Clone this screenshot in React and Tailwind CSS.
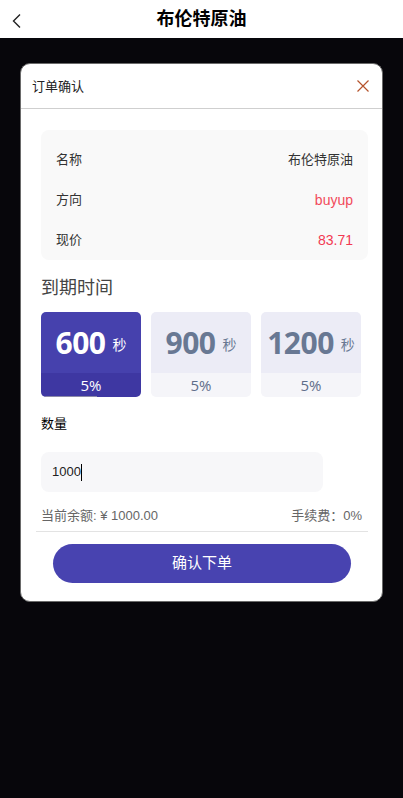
import React from "react";

const cjk = { fontFamily: '"Liberation Sans", "Noto Sans CJK SC", sans-serif' };
const num = { fontFamily: '"Open Sans", "Noto Sans CJK SC", sans-serif' };

function Card({ value, active }) {
  return (
    <div className="relative w-[100px] h-[85px] rounded-[5px] overflow-hidden flex flex-col">
      <div
        className={`h-[61px] flex items-center justify-center gap-[7px] ${
          active ? "bg-[#4641ad] text-white" : "bg-[#ececf6] text-[#687893]"
        }`}
      >
        <span className="text-[30px] font-bold leading-none tracking-[-0.5px]" style={num}>
          {value}
        </span>
        <span className="text-[14px] mt-[6px]" style={cjk}>秒</span>
      </div>
      <div
        className={`h-[24px] flex items-center justify-center text-[15px] ${
          active ? "bg-[#3e37a2] text-white" : "bg-[#f5f5f9] text-[#5f6d8a]"
        }`}
        style={num}
      >
        5%
      </div>
      {active && <div className="absolute left-[4px] bottom-0 w-[52px] h-[1px] bg-[#8c8aa8]" />}
    </div>
  );
}

export default function App() {
  return (
    <div className="min-h-[798px] bg-[#07060b]" style={cjk}>
      <div className="h-[38px] bg-white relative flex items-center justify-center">
        <svg className="absolute left-[11px] top-[13px]" width="11" height="16" viewBox="0 0 11 16">
          <path d="M9 1.5 L2.5 8 L9 14.5" fill="none" stroke="#222" strokeWidth="1.4" />
        </svg>
        <span className="text-[18px] font-bold text-black">布伦特原油</span>
      </div>

      <div className="mx-[20px] mt-[25px] bg-white rounded-[10px] border border-[#6a6a6a] pb-[18px]">
        <div className="h-[45px] flex items-center justify-between pl-[11px] pr-[13px] border-b border-[#cfcfcf]">
          <span className="text-[13px] text-[#222] mt-[1px]">订单确认</span>
          <svg width="12" height="12" viewBox="0 0 12 12">
            <path d="M0.5 0.5 L11.5 11.5 M11.5 0.5 L0.5 11.5" stroke="#b5532c" strokeWidth="1.2" />
          </svg>
        </div>

        <div className="pl-[20px]">
          <div className="mt-[21px] w-[327px] bg-[#f9f9f9] rounded-[8px] pt-[10px] text-[13px]">
            <div className="h-[40px] flex items-center justify-between px-[15px]">
              <span className="text-[#333]">名称</span>
              <span className="text-[#333]">布伦特原油</span>
            </div>
            <div className="h-[40px] flex items-center justify-between px-[15px]">
              <span className="text-[#333]">方向</span>
              <span className="text-[#f24b5b] text-[14px]">buyup</span>
            </div>
            <div className="h-[40px] flex items-center justify-between px-[15px]">
              <span className="text-[#333]">现价</span>
              <span className="text-[#f23a52] text-[14px]">83.71</span>
            </div>
          </div>

          <div className="mt-[16px] text-[18px] leading-[24px] text-[#444]">到期时间</div>

          <div className="mt-[12px] flex gap-[10px]">
            <Card value="600" active />
            <Card value="900" />
            <Card value="1200" />
          </div>

          <div className="mt-[17px] text-[13px] leading-[20px] text-black">数量</div>

          <div className="mt-[18px] w-[282px] h-[40px] bg-[#f7f7f9] rounded-[8px] flex items-center pl-[11px] text-[13px] text-[#222]">
            1000<span className="inline-block w-[1px] h-[17px] bg-black" />
          </div>

          <div className="mt-[14px] w-[321px] flex items-center justify-between text-[13px] leading-[20px] text-[#666]">
            <span>当前余额: ¥ 1000.00</span>
            <span>手续费：0%</span>
          </div>

          <div className="mt-[5px] -ml-[5px] w-[332px] h-[1px] bg-[#e3e3e3]" />

          <div className="mt-[12px] ml-[12px] w-[298px] h-[39px] rounded-full bg-[#4843b0] flex items-center justify-center text-white text-[15px]">
            确认下单
          </div>
        </div>
      </div>
    </div>
  );
}
